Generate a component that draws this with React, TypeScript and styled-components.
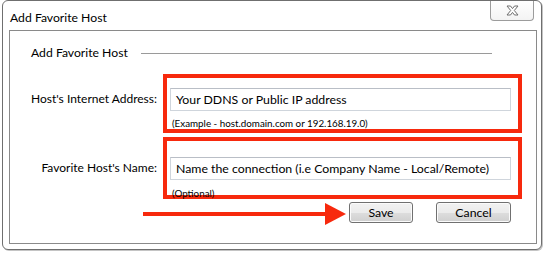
import React from "react";
import styled, { createGlobalStyle } from "styled-components";

const Global = createGlobalStyle`
  html, body { margin: 0; padding: 0; background: #ffffff; }
  body { font-family: "Segoe UI", Lato, "Open Sans", sans-serif; color: #1e1e1e; }
`;

const Page = styled.div`
  width: 545px;
  height: 253px;
  padding: 0 0 0 2px;
  box-sizing: border-box;
`;

const Window = styled.div`
  width: 540px;
  height: 250px;
  box-sizing: border-box;
  border: 1px solid #6f6f6f;
  border-radius: 6px;
  background: #ffffff;
  box-shadow: 1px 1px 0 #c4c4c4;
  display: flex;
  flex-direction: column;
`;

const TitleBar = styled.div`
  height: 29px;
  display: flex;
  align-items: flex-start;
  justify-content: space-between;
  padding-left: 7px;
  padding-right: 7px;
`;

const Title = styled.div`
  font-size: 12.2px;
  line-height: 16px;
  padding-top: 9px;
  color: #000;
`;

const CloseButton = styled.div`
  width: 44px;
  height: 20px;
  box-sizing: border-box;
  border: 1px solid #9c9c9c;
  border-top: none;
  border-radius: 0 0 4px 4px;
  background: linear-gradient(#ffffff, #f3f3f3);
  display: flex;
  align-items: center;
  justify-content: center;
`;

const Panel = styled.div`
  margin: 0 4px 5px 6px;
  flex: 1;
  border: 1px solid #8a8a8a;
  display: flex;
  flex-direction: column;
`;

const GroupHeader = styled.div`
  display: flex;
  align-items: center;
  padding: 14px 0 0 21px;
  height: 16px;
  gap: 13px;
`;

const GroupTitle = styled.div`
  font-size: 12.2px;
  line-height: 16px;
  color: #000;
  white-space: nowrap;
`;

const GroupRule = styled.div`
  width: 351px;
  height: 1px;
  background: #9a9a9a;
`;

const Row = styled.div<{ $top: number }>`
  display: flex;
  margin-top: ${(p) => p.$top}px;
`;

const Label = styled.div<{ $offset: number }>`
  width: 147px;
  box-sizing: border-box;
  text-align: right;
  font-size: 12px;
  line-height: 16px;
  padding-top: ${(p) => p.$offset}px;
  margin-right: 6px;
  color: #000;
  white-space: nowrap;
`;

const RedBox = styled.div<{ $height: number; $padTop: number }>`
  width: 359px;
  height: ${(p) => p.$height}px;
  box-sizing: border-box;
  border: 4px solid #f7290d;
  padding: ${(p) => p.$padTop}px 7px 0 3px;
  display: flex;
  flex-direction: column;
`;

const TextBox = styled.div`
  width: 341px;
  height: 23px;
  box-sizing: border-box;
  border: 1px solid #cfd5dc;
  border-top-color: #b9bec6;
  background: #fff;
  font-size: 12.3px;
  line-height: 21px;
  padding-left: 5px;
  color: #000;
  white-space: nowrap;
`;

const Hint = styled.div<{ $top: number }>`
  font-size: 9.8px;
  line-height: 12px;
  margin-top: ${(p) => p.$top}px;
  padding-left: 2px;
  color: #000;
  white-space: nowrap;
`;

const ButtonRow = styled.div`
  display: flex;
  align-items: flex-start;
  margin-top: 3px;
  padding-left: 133px;
`;

const Arrow = styled.svg`
  display: block;
  margin-top: 1px;
`;

const Button = styled.div<{ $width: number; $gap: number }>`
  width: ${(p) => p.$width}px;
  height: 21px;
  box-sizing: border-box;
  margin-left: ${(p) => p.$gap}px;
  border: 1px solid #707070;
  border-radius: 3px;
  background: linear-gradient(#f2f2f2 0%, #ebebeb 50%, #dddddd 51%, #cfcfcf 100%);
  box-shadow: inset 0 0 0 1px #fbfbfb;
  font-size: 12.3px;
  line-height: 19px;
  text-align: center;
  color: #000;
`;

export default function App() {
  return (
    <>
      <Global />
      <Page>
        <Window>
          <TitleBar>
            <Title>Add Favorite Host</Title>
            <CloseButton>
              <svg width="13" height="11" viewBox="0 0 13 11">
                <polygon
                  points="1,1 4.5,1 6.5,3.6 8.5,1 12,1 8.3,5.5 12,10 8.5,10 6.5,7.4 4.5,10 1,10 4.7,5.5"
                  fill="#ffffff"
                  stroke="#6e6e6e"
                  strokeWidth="1"
                  strokeLinejoin="round"
                />
              </svg>
            </CloseButton>
          </TitleBar>
          <Panel>
            <GroupHeader>
              <GroupTitle>Add Favorite Host</GroupTitle>
              <GroupRule />
            </GroupHeader>
            <Row $top={13}>
              <Label $offset={17}>Host's Internet Address:</Label>
              <RedBox $height={59} $padTop={10}>
                <TextBox>Your DDNS or Public IP address</TextBox>
                <Hint $top={6}>(Example - host.domain.com or 192.168.19.0)</Hint>
              </RedBox>
            </Row>
            <Row $top={4}>
              <Label $offset={23}>Favorite Host's Name:</Label>
              <RedBox $height={62} $padTop={16}>
                <TextBox>Name the connection (i.e Company Name - Local/Remote)</TextBox>
                <Hint $top={7}>(Optional)</Hint>
              </RedBox>
            </Row>
            <ButtonRow>
              <Arrow width="203" height="23" viewBox="0 0 203 23">
                <rect x="0" y="9" width="184" height="4" fill="#f7290d" />
                <polygon points="182,0 203,11 182,22" fill="#f7290d" />
              </Arrow>
              <Button $width={64} $gap={3}>Save</Button>
              <Button $width={75} $gap={23}>Cancel</Button>
            </ButtonRow>
          </Panel>
        </Window>
      </Page>
    </>
  );
}
